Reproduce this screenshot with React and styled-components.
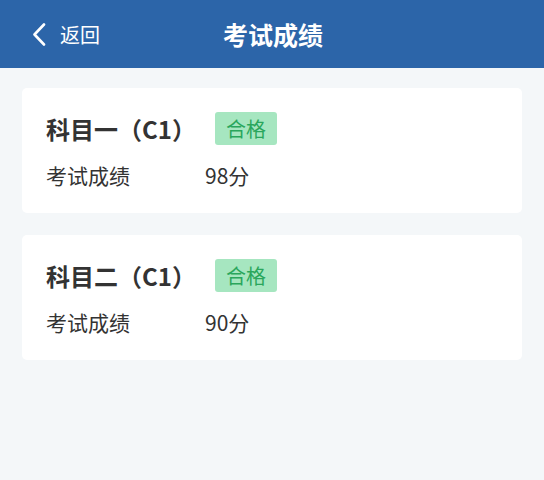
import React from "react";
import styled, { createGlobalStyle } from "styled-components";

const GlobalStyle = createGlobalStyle`
  body {
    margin: 0;
    background: #f4f7f9;
    font-family: "Noto Sans CJK SC", "Noto Sans", sans-serif;
  }
`;

const Page = styled.div`
  min-height: 480px;
  background: #f4f7f9;
`;

const Header = styled.header`
  position: relative;
  height: 68px;
  background: #2c65a9;
  display: flex;
  align-items: center;
  justify-content: center;
  color: #fff;
`;

const Back = styled.div`
  position: absolute;
  left: 32px;
  top: 0;
  bottom: 0;
  display: flex;
  align-items: center;
  gap: 14px;
  font-size: 20px;
`;

const Title = styled.h1`
  margin: 0 0 0 2px;
  font-size: 25px;
  font-weight: 700;
`;

const List = styled.div`
  display: flex;
  flex-direction: column;
  gap: 22px;
  padding: 20px 22px;
`;

const Card = styled.div`
  background: #fff;
  border-radius: 5px;
  padding: 24px 24px 25px;
`;

const TitleRow = styled.div`
  display: flex;
  align-items: center;
  height: 33px;
`;

const Subject = styled.div`
  width: 169px;
  font-size: 24px;
  font-weight: 700;
  color: #333;
  white-space: nowrap;
`;

const Badge = styled.span`
  display: inline-flex;
  align-items: center;
  justify-content: center;
  width: 62px;
  height: 33px;
  border-radius: 3px;
  background: ${(p) => (p.pass ? "#a6e6c0" : "#f7c6c6")};
  color: ${(p) => (p.pass ? "#2aa65c" : "#d44")};
  font-size: 20px;
`;

const Row = styled.div`
  display: flex;
  align-items: center;
  margin-top: 17px;
  height: 26px;
  font-size: 21px;
  color: #333;
`;

const Label = styled.span`
  width: 159px;
`;

const results = [
  { subject: "科目一（C1）", score: 98, pass: true },
  { subject: "科目二（C1）", score: 90, pass: true },
];

export default function App() {
  return (
    <Page>
      <GlobalStyle />
      <Header>
        <Back>
          <svg width="14" height="23" viewBox="0 0 14 23" fill="none">
            <path
              d="M12 1.5 L2.5 11.5 L12 21.5"
              stroke="#fff"
              strokeWidth="2.6"
              strokeLinecap="round"
              strokeLinejoin="round"
            />
          </svg>
          <span>返回</span>
        </Back>
        <Title>考试成绩</Title>
      </Header>
      <List>
        {results.map((r) => (
          <Card key={r.subject}>
            <TitleRow>
              <Subject>{r.subject}</Subject>
              <Badge pass={r.pass}>{r.pass ? "合格" : "不合格"}</Badge>
            </TitleRow>
            <Row>
              <Label>考试成绩</Label>
              <span>{r.score}分</span>
            </Row>
          </Card>
        ))}
      </List>
    </Page>
  );
}
